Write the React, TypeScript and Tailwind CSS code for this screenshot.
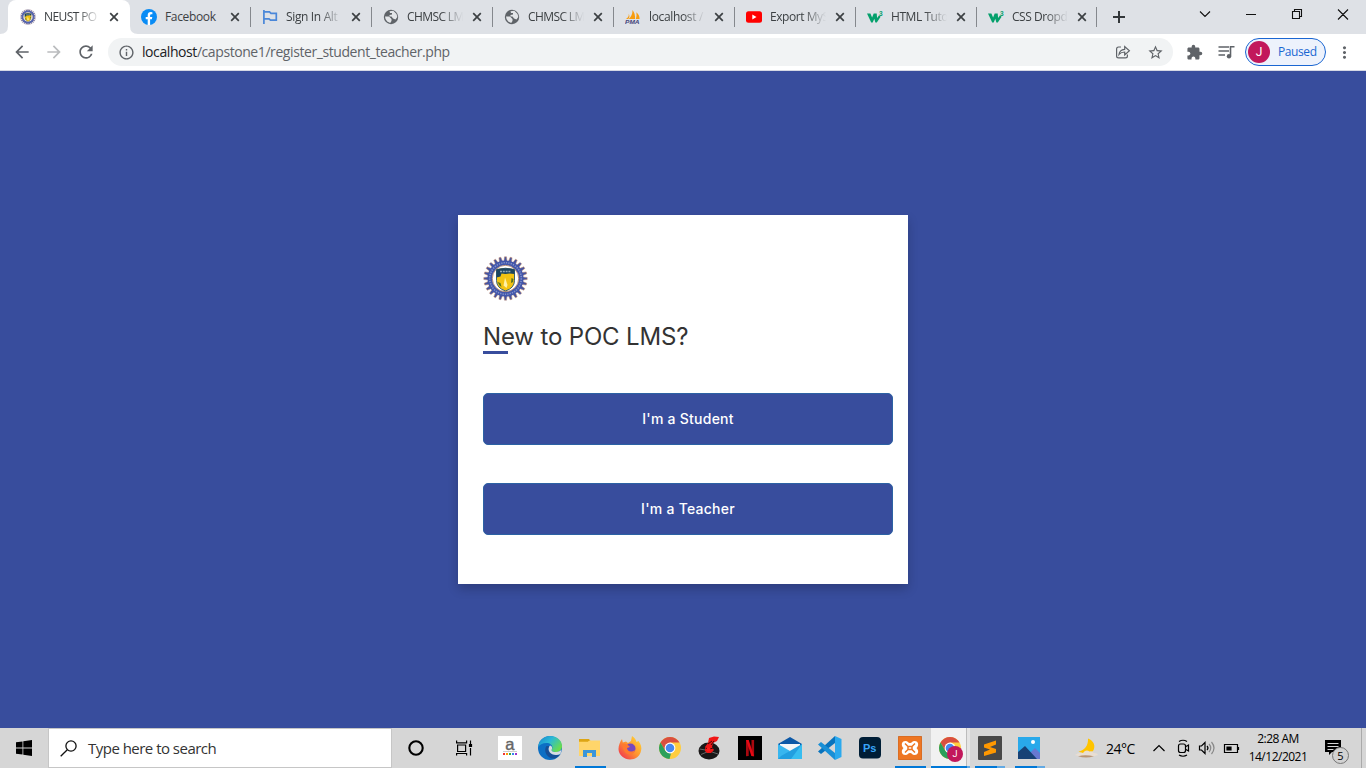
import React from "react";
import {
  MdArrowBack, MdArrowForward, MdRefresh, MdInfoOutline, MdStarBorder,
  MdExtension, MdMoreVert,
} from "react-icons/md";

const ui = "font-['Open_Sans','Noto_Sans',sans-serif]";

function Seal({ size }: { size: number }) {
  const teeth = Array.from({ length: 24 }, (_, i) => i * 15);
  return (
    <svg width={size} height={size} viewBox="0 0 45 45">
      {teeth.map((a) => (
        <path key={a} d="M20.900 5.500 21.500.8h2l.6 4.700z" fill="#4353a2" stroke="#c98f68" strokeWidth=".5" transform={`rotate(${a} 22.5 22.5)`} />
      ))}
      <circle cx="22.500" cy="22.500" r="18" fill="#4156ab" />
      <circle cx="22.500" cy="22.500" r="15.800" fill="none" stroke="#8290c8" strokeWidth="1.600" strokeDasharray="1.300 1.100" />
      <circle cx="22.500" cy="22.500" r="13.200" fill="#fff" stroke="#b98a6c" strokeWidth=".9" />
      <path d="M13.500 13.500q9-2.500 18 0v11q0 7.500-9 10.500-9-3-9-10.500z" fill="#f3c312" stroke="#3b6270" strokeWidth="1" />
      <path d="M13.500 13.500q9-2.500 18 0v4.500l-5-.5-4 .5-4-.5-1 3-4 1z" fill="#1c4560" />
      <path d="M17 15.500h11" stroke="#94a9b7" strokeWidth="1.600" strokeDasharray="2 .8" />
      <path d="M22 21.500l-1.500 8 3 2.500 1-3z" fill="#fff2a8" />
      <path d="M14.500 26l3 1 1 4-2-1.500zM28.500 22l2 1-.5 3-2 1z" fill="#54731f" />
    </svg>
  );
}

const Flag = () => (
  <svg width="16" height="16" viewBox="0 0 16 16" fill="none" stroke="#4a87d9" strokeWidth="1.700">
    <path d="M1.900 1v14M2 2.800h5.500l1.500 1.500h5.300v6.900H8.500L7 9.900H2" />
  </svg>
);
const Pma = () => (
  <svg width="17" height="16" viewBox="0 0 17 16">
    <path d="M8 .5c2 2.500 3 6 2.700 9.500H4C6.500 8 8 5 8 .5zM12 3c2.500 2 3.500 4.500 3.500 7h-4c.8-2 1-4.500.5-7zM4 4.500C4.300 7 3.200 9 1 10h2.500C5 8.500 5 6.500 4 4.500z" fill="#f89c0e" />
    <text x="0" y="15.500" fontFamily="Liberation Sans" fontWeight="700" fontStyle="italic" fontSize="6.500" fill="#43457a" textLength="15.500" lengthAdjust="spacingAndGlyphs">PMA</text>
  </svg>
);
const Tube = () => (
  <svg width="16" height="16" viewBox="0 0 16 16"><rect y="2.300" width="16" height="11.400" rx="2.500" fill="#f00" /><path d="M6.300 5.600v4.800L10.500 8z" fill="#fff" /></svg>
);
const W3 = () => (
  <svg width="16" height="16" viewBox="0 0 16 16">
    <path d="M0 4.500h3.400l1.700 4 1.600-4h3l.4 4.600 2-2.800 1.500 1.500-3.800 5.700H8.400L7.300 9.800l-1.600 3.700H4.200z" fill="#05a06c" />
    <text x="12" y="6.500" fontFamily="Liberation Sans" fontWeight="700" fontSize="6.500" fill="#05a06c">3</text>
  </svg>
);
const Facebook = () => (
  <svg width="16" height="16" viewBox="0 0 16 16"><circle cx="8" cy="8" r="8" fill="#0a8cf5" /><path d="M6.700 16v-5.700h-2V8h2V6.200c0-2 1.200-3.100 3-3.100l1.700.1v2h-1c-1 0-1.300.6-1.300 1.300V8h2.200l-.4 2.300H9.100V16z" fill="#fff" /></svg>
);
const Globe = () => (
  <svg width="16" height="16" viewBox="0 0 16 16"><circle cx="8" cy="8" r="7.200" fill="#5f6368" /><path d="M2 7.500h4L8.500 10v2L7.200 14l-3-1.500L2.500 10zM6.500 2.200l3.800-.4L13.500 5l.8 3-1.800 2.500-2.500-1L8.500 7.500h-2V6L9 5.500V4H7z" fill="#e3e5e8" /></svg>
);
const Cross = () => (
  <svg className="ml-[8px] shrink-0" width="12" height="12" viewBox="0 0 12 12"><path d="M2.200 2.200l7.600 7.600M9.800 2.200L2.200 9.800" stroke="#3c4043" strokeWidth="1.700" /></svg>
);

const tabs = [
  { title: "NEUST PO", icon: <Seal size={16} /> },
  { title: "Facebook", icon: <Facebook /> },
  { title: "Sign In Alt", icon: <Flag /> },
  { title: "CHMSC LM", icon: <Globe /> },
  { title: "CHMSC LM", icon: <Globe /> },
  { title: "localhost /", icon: <Pma /> },
  { title: "Export MyS", icon: <Tube /> },
  { title: "HTML Tuto", icon: <W3 /> },
  { title: "CSS Dropd", icon: <W3 /> },
];

function TabStrip() {
  return (
    <div className="flex h-[34px] bg-[#dee1e6] pl-2">
      {tabs.map((t, i) => (
        <div
          key={i}
          className={`relative flex h-full shrink-0 items-center ${i === 0 ? "w-[122px] rounded-t-lg bg-white pl-3" : i === 8 ? "w-[120px] pl-[11px]" : "w-[121px] pl-[11px]"}`}
        >
          {i === 0 && (
            <>
              <svg className="absolute bottom-0 -left-2" width="8" height="8"><path d="M8 0v8H0q8 0 8-8z" fill="#fff" /></svg>
              <svg className="absolute -right-2 bottom-0" width="8" height="8"><path d="M0 0v8h8q-8 0-8-8z" fill="#fff" /></svg>
            </>
          )}
          <span className="flex w-4 shrink-0">{t.icon}</span>
          <span className={`ml-2 w-[56px] text-[12px] leading-[18px] whitespace-nowrap text-[#3c4043] ${i === 0 || i === 3 || i === 4 ? "tracking-[-0.6px]" : i === 6 || i > 6 ? "tracking-[-0.45px]" : "tracking-[-0.35px]"} ${i === 1 ? "" : "mask-r-from-60% mask-r-to-100%"}`}>{t.title}</span>
          <Cross />
          {i > 0 && <span className="ml-auto h-5 w-px bg-[#85888d]" />}
        </div>
      ))}
      <svg className="mt-[10px] ml-[15px] shrink-0" width="14" height="14" viewBox="0 0 14 14"><path d="M7 1v12M1 7h12" stroke="#33373a" strokeWidth="2" /></svg>
      <svg className="ml-auto shrink-0" width="184" height="34" viewBox="1182 0 184 34" fill="none" stroke="#111" strokeWidth="1.100">
        <path d="M1200 11.500l5 5 5-5M1246 14.500h10M1338 9.500l10 10M1348 9.500l-10 10" />
        <path d="M1292.500 11.500h7v7h-7zM1294.500 11.500v-2h7v7h-2" />
      </svg>
    </div>
  );
}

function Toolbar() {
  return (
    <div className="flex h-[37px] items-center border-b border-[#d5d8e4] bg-white pl-3 text-[#5f6368]">
      <MdArrowBack size={20} />
      <MdArrowForward size={20} className="ml-3 text-[#babcbe]" />
      <MdRefresh size={20} className="ml-3" />
      <div className="ml-3 flex h-7 w-[1065px] items-center rounded-full bg-[#f1f3f4] pl-[10px]">
        <MdInfoOutline size={17} />
        <span className="ml-[7px] text-[14px] leading-5 tracking-[-0.42px] whitespace-nowrap"><span className="text-[#202124]">localhost</span>/capstone1/register_student_teacher.php</span>
        <svg className="ml-auto" width="16" height="16" viewBox="0 0 16 16" fill="none" stroke="#5f6368" strokeWidth="1.200">
          <path d="M6 3H3.500Q1.600 3 1.600 5v7q0 1.900 1.900 1.900h7q1.900 0 1.900-1.900v-1.500M4 10.500Q4.500 5.700 9.700 5.300V2.500l4.700 4.200-4.700 4.200V8Q6 8 4 10.500z" />
        </svg>
        <MdStarBorder className="mr-[9px] ml-4" size={17} />
      </div>
      <MdExtension className="ml-[13px]" size={17} />
      <svg className="ml-[15px]" width="17" height="16" viewBox="0 0 17 16" fill="none" stroke="#5f6368" strokeWidth="1.600">
        <path d="M.5 3H11M.5 7H11M.5 11H7M12.500 12V2.800H16.500" /><circle cx="11" cy="12.200" r="2.200" fill="#5f6368" stroke="none" />
      </svg>
      <div className="ml-[10px] flex h-7 w-[81px] items-center rounded-full border border-[#1a66d2] bg-[#edf2fc] pl-[2px] text-[#1967d2]">
        <span className="flex size-[22px] items-center justify-center rounded-full bg-[#c2185b] font-['Roboto',sans-serif] text-[12px] text-white">J</span>
        <span className="ml-2 text-[12px] tracking-[-0.4px]">Paused</span>
      </div>
      <MdMoreVert className="ml-[9px]" size={19} />
    </div>
  );
}

function RegisterCard() {
  const btn = "flex h-[52px] w-[410px] items-center justify-center rounded-[5px] border border-[#2c62a4] bg-[#384d9d] pb-[2px] text-[14px] font-medium text-white";
  return (
    <div className="h-[369px] w-[450px] bg-white px-[25px] pt-[41px] font-['Inter',sans-serif] shadow-[0_5px_10px_rgba(0,0,0,0.2)]">
      <Seal size={45} />
      <h1 className="mt-[18px] h-[32px] text-[24px] leading-[36px] tracking-[-0.15px] whitespace-nowrap text-[#333]">New to POC LMS?</h1>
      <div className="h-[3px] w-[25px] bg-[#384d9d]" />
      <button className={`mt-[39px] tracking-[0.25px] ${btn}`}>I'm a Student</button>
      <button className={`mt-[38px] tracking-[0.25px] ${btn}`}>I'm a Teacher</button>
    </div>
  );
}

const Chrome = () => (
  <svg width="24" height="24" viewBox="0 0 24 24">
    <circle cx="12" cy="12" r="11" fill="#ffcd40" />
    <path d="M2.500 6.500A11 11 0 0 1 21.500 6.500H12L7.200 14.800z" fill="#d94f40" />
    <path d="M2.500 6.500L7.300 14.700Q9.500 17.500 13 17.300L11.500 23A11 11 0 0 1 2.500 6.500z" fill="#2ba05b" />
    <circle cx="12" cy="12" r="5.400" fill="#fff" /><circle cx="12" cy="12" r="4.300" fill="#4688f1" />
  </svg>
);

const svg24 = (c: React.ReactNode) => <svg width="24" height="24" viewBox="0 0 24 24">{c}</svg>;

const apps: { icon: React.ReactNode; kind?: "one" | "many" | "active" }[] = [
  { icon: svg24(<><rect width="24" height="24" fill="#fff" /><text x="7.300" y="14" fontFamily="Liberation Sans" fontSize="16.500" fill="#666" stroke="#666" strokeWidth=".4">a</text><path d="M5 15.500h14" stroke="#ccc" />{["#e33", "#f90", "#3a4", "#38e", "#93c"].map((c, i) => <rect key={c} x={5 + i * 3} y="17" width="2" height="2" fill={c} />)}</>) },
  { icon: svg24(<><defs><linearGradient id="edge" x1="0" y1="0" x2="1" y2=".6"><stop stopColor="#1683cd" /><stop offset=".5" stopColor="#2bb9d6" /><stop offset="1" stopColor="#68dc4e" /></linearGradient></defs><circle cx="12" cy="12" r="12" fill="#0c6fc4" /><path d="M0 11C1 4 6 0 12 0c7 0 12 4.500 12 10 0 4-3 6-6.500 6-3 0-4-1-4-2l1-2c0-3-2.500-5-6-5-4 0-7 2-8.500 4z" fill="url(#edge)" /><path d="M8.500 10c-3 4-.5 10 4 12 4 1.500 7.500-.5 10-4-4 2-9 1-11-2-1.500-2-1.500-4 0-6z" fill="#164f96" /><path d="M12 9.500c2 .5 2.500 2 2 3.500-1 1.500-.5 3 4 3 2.500 0 4.500-1 5.500-2.500L22.500 18c-4 2-9 1-11-2-1.500-2.500-1-5 .5-6.500z" fill="#d7dce1" /></>) },
  { kind: "one", icon: svg24(<><path d="M1 3h10l1.500 2H22v3H1z" fill="#dda514" /><path d="M1 5.500h9l1.500-1H22V20H1z" fill="#ffd56a" /><path d="M1 3h9v2.500H1z" fill="#dda514" /><path d="M5 21v-7h13v7h-4v-4H9v4z" fill="#3b96da" /></>) },
  { icon: svg24(<><defs><linearGradient id="fox" x1="1" y1="0" x2="0" y2="1"><stop stopColor="#ffe336" /><stop offset=".5" stopColor="#ff932f" /><stop offset="1" stopColor="#ed2356" /></linearGradient></defs><path d="M14 0c3 2 4 4 4.500 6l2-1c2.500 3 3.500 7 2.500 10-1 5-5.500 8.500-11 8.500S.5 19 .5 13C.5 9 2 6 4 3l.8 3.500L8 5.500 10 7l3-2z" fill="url(#fox)" /><circle cx="12.500" cy="12.500" r="5" fill="#7849bd" /><path d="M4 8c4-1 6 1 8 3l-3 1c0 3 4 5 8 2-1 5-7 6-10 2-2-2-2-5-3-8z" fill="#ff7a2e" /></>) },
  { icon: <Chrome /> },
  { icon: svg24(<><ellipse cx="11" cy="15" rx="10.500" ry="8.500" fill="#191717" /><path d="M1.500 13l6 1M3 18.500l6-2.500M20 18l-6-2" stroke="#666" /><path d="M7 11l3-4 1-5 5-1.500L21 1l-2 4-4 2-1 4 2 3-3 3H9l-2-2z" fill="#f01515" /><path d="M10 8l4-3M13 9l3-4M7.500 12l3 1M15 12l-3 1" stroke="#420606" /><circle cx="10.500" cy="13.500" r="2" fill="#ff1a1a" /></>) },
  { icon: svg24(<><path d="M0 0h24v24H0z" fill="#000" /><path d="M8 4h2.700v16L8 20.300zM13.500 4h2.600v16.300l-2.600-.3z" fill="#a9080f" /><path d="M8 4h2.700l5.400 16.300-2.700-.3z" fill="#e50914" /></>) },
  { icon: svg24(<><path d="M0 8l12-7 12 7v5H0z" fill="#0c58a7" /><path d="M2 8h20v8H2z" fill="#f4f6f8" /><path d="M0 8l12 7-9 8H0z" fill="#38b6ef" /><path d="M24 8L3 20l-3 3h24z" fill="#229fe0" /><path d="M24 8v15H13z" fill="#37bdf0" /></>) },
  { icon: svg24(<><path d="M17 0l6.500 3v18L17 24z" fill="#2aa9ee" /><path d="M17 0v7L3 18l-3-2.500z" fill="#0873bd" /><path d="M17 24v-7L3 6 0 8.500z" fill="#188fd6" /></>) },
  { icon: svg24(<><rect x="1" y="1" width="22" height="21.500" rx="4" fill="#001e36" /><text x="5" y="15.700" fontFamily="Liberation Sans" fontWeight="700" fontSize="11" fill="#39a5fa">Ps</text></>) },
  { kind: "one", icon: svg24(<><rect width="24" height="24" rx="2" fill="#ee7623" stroke="#c76425" /><path d="M7.500 5c2.500 0 2.500 2 4.500 2s2-2 4.500-2c4.500 0 4.500 5 2 7 2.500 2 2.500 7-2 7-2.500 0-2.500-2-4.500-2s-2 2-4.500 2c-4.500 0-4.500-5-2-7-2.500-2-2.500-7 2-7z" fill="#fff" /><path d="M7 7.500l3 3M17 7.500l-3 3M7 16.500l3-3M17 16.500l-3-3M10 10.500h4v3h-4z" stroke="#ee7623" strokeWidth="1.500" fill="none" /></>) },
  { kind: "active", icon: <span className="relative flex"><Chrome /><span className="absolute top-[10px] left-[9px] flex size-4 items-center justify-center rounded-full bg-[#c2185b] font-['Roboto',sans-serif] text-[9px] leading-none text-white">J</span></span> },
  { kind: "many", icon: svg24(<><rect width="24" height="24" rx="1" fill="#484848" /><path d="M6 8.500l12-4v4L12 11l6 2v3.500L6 20v-4l6-2.500-6-2z" fill="#ff9800" /></>) },
  { kind: "many", icon: svg24(<><rect y="1" width="22" height="22" fill="#29a9ea" /><path d="M12 17l5-5 5 5v6H12z" fill="#6779d1" /><path d="M0 16l7-6 12 13H0z" fill="#174276" /><circle cx="15" cy="6" r="2" fill="#fff" /></>) },
];

function Taskbar() {
  return (
    <div className="flex h-10 bg-[#d6d6d6] text-black">
      <div className="flex w-12 items-center justify-center">
        <svg width="16" height="16" viewBox="0 0 16 16"><path d="M0 2.300l6.500-.9v6.200H0zM7.300 1.300L16 0v7.600H7.300zM0 8.400h6.500v6.200L0 13.700zM7.300 8.400H16V16l-8.700-1.300z" /></svg>
      </div>
      <div className="flex w-[344px] items-center border border-[#c6c6c6] bg-white pl-[11px]">
        <svg width="17" height="17" viewBox="0 0 17 17" fill="none" stroke="#111" strokeWidth="1.300"><circle cx="11" cy="6" r="5.100" /><path d="M7.300 9.700L.7 16.300" /></svg>
        <span className="ml-[11px] text-[15px] tracking-[-0.52px] whitespace-nowrap text-[#333]">Type here to search</span>
      </div>
      <div className="flex w-12 items-center justify-center"><svg width="16" height="16"><circle cx="8" cy="8" r="6.700" fill="none" stroke="#000" strokeWidth="2.100" /></svg></div>
      <div className="flex w-[50px] items-center pl-4">
        <svg width="17" height="16" viewBox="0 0 17 16" fill="none" stroke="#000" strokeWidth="1.200"><path d="M.6.500v2.300h10V.5M1.600 5h8v6.500h-8zM.6 15.500v-2h10v2M14.500.5v4M14.500 8v7.500" /><path d="M13.500 4.500h2v2h-2z" fill="#000" stroke="#000" /></svg>
      </div>
      {apps.map((a, i) => (
        <div key={i} className="relative flex w-10 shrink-0 items-center justify-center">
          {a.kind === "active" && <span className="absolute inset-y-0 left-px flex w-[39px] bg-[#e4e4e4]"><span className="w-[36px] border-r border-[#bcbcbc] bg-[#f1f1f1]" /></span>}
          <span className="relative flex">{a.icon}</span>
          {a.kind === "one" && <span className="absolute bottom-0 left-[5px] h-[2px] w-[31px] bg-[#0078d7]" />}
          {a.kind === "active" && <span className="absolute bottom-0 left-px flex h-[2px] w-[39px] bg-[#62a9e3]"><span className="w-9 bg-[#0078d7]" /></span>}
          {a.kind === "many" && <span className="absolute bottom-0 left-[5px] flex h-[2px] w-[30px] bg-[#62a9e3]"><span className="w-[22px] bg-[#0078d7]" /></span>}
        </div>
      ))}
      <div className="flex flex-1 items-center pl-[25px]">
        <svg width="24" height="20" viewBox="0 0 24 20"><path d="M13 .5c6 2 8 8 5 12.500-4 3-10 3-14.500.5 6-1 10-6 9.500-13z" fill="#ffc400" /><path d="M0 17q4-3 8-2 3-4 6.500-1.500 3-1 4 1.500 4 0 4.500 2-11 4-23 0z" fill="#e9ded2" /><path d="M3 18.300q7-2 16 0-8 2.500-16 0z" fill="#b99576" /></svg>
        <span className="ml-[7px] w-[46px] text-[14px] tracking-[-0.5px]">24°C</span>
        <svg width="84" height="20" viewBox="1152 738 84 20" fill="none" stroke="#000" strokeWidth="1.200" overflow="visible">
          <path d="M1153.500 751l5.500-5.500 5.500 5.500" />
          <rect x="1178.500" y="744" width="7" height="8.500" rx="2" /><path d="M1186 746.500l2.500-1.500v6l-2.500-1.500M1179 741.500q4-2.500 8 0M1179 755q4 2.500 8 0" />
          <path d="M1199.500 746h2l3.500-3.500v11l-3.500-3.500h-2zM1207 746q2 2 0 4" /><path d="M1209 744q3.500 4 0 8M1211.500 742q5 6 0 12" stroke="#888" />
          <path d="M1224.500 744.500h13v8h-13zM1238.500 747v3" /><path d="M1227 747h4v3h-4z" fill="#000" />
        </svg>
      </div>
      <div className="w-[84px] pt-[2px] text-center text-[12px] leading-[18px] tracking-[-0.5px] whitespace-nowrap">
        <div className="-ml-[2px]">2:28 AM</div><div className="-ml-[2px]">14/12/2021</div>
      </div>
      <div className="relative w-[41px] border-r border-[#aaa]">
        <svg className="mt-3 ml-1" width="16" height="16" viewBox="0 0 16 16"><path d="M0 0h16v12H7l-3 3v-3H0z" /><path d="M2.500 3.500h11M2.500 6.500h11M2.500 9.500h6" stroke="#d6d6d6" /></svg>
        <span className="absolute top-[19px] left-[11px] flex size-[17px] items-center justify-center rounded-full border border-[#777] bg-[#d2d2d2] text-[11px] leading-none">5</span>
      </div>
      <div className="w-[4px]" />
    </div>
  );
}

export default function App() {
  return (
    <div className={`flex h-[768px] w-[1366px] flex-col overflow-hidden ${ui}`}>
      <TabStrip />
      <Toolbar />
      <main className="flex flex-1 items-center justify-center bg-[#384d9d]">
        <RegisterCard />
      </main>
      <Taskbar />
    </div>
  );
}
